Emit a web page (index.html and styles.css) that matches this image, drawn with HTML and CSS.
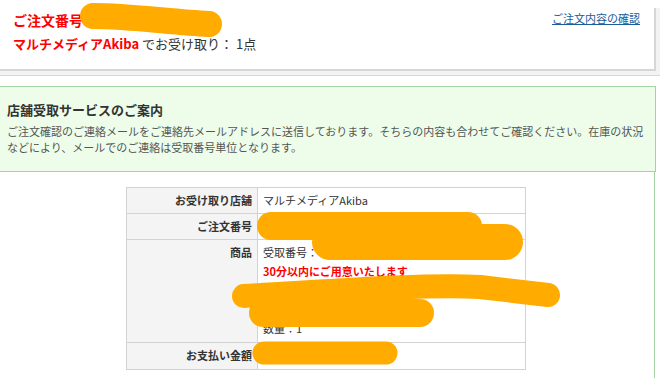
FILE: index.html
```html
<!DOCTYPE html>
<html lang="ja">

<head>
    <meta charset="UTF-8">
    <meta name="viewport" content="width=device-width, initial-scale=1.0">
    <title>ご注文内容</title>
    <link rel="stylesheet" href="styles.css">
</head>

<body>
    <div class="order-bar">
        <div class="order-card">
            <div class="order-row">
                <h1 class="order-no">ご注文番号</h1>
                <a class="order-link" href="#">ご注文内容の確認</a>
            </div>
            <p class="order-shop"><span class="shop-name">マルチメディアAkiba</span> でお受け取り： 1点</p>
        </div>
    </div>

    <div class="guide">
        <h2 class="guide-title">店舗受取サービスのご案内</h2>
        <p class="guide-text">ご注文確認のご連絡メールをご連絡先メールアドレスに送信しております。そちらの内容も合わせてご確認ください。在庫の状況などにより、メールでのご連絡は受取番号単位となります。</p>
    </div>

    <div class="detail">
        <table class="detail-table">
            <tr>
                <th>お受け取り店舗</th>
                <td>マルチメディアAkiba</td>
            </tr>
            <tr>
                <th>ご注文番号</th>
                <td>&nbsp;</td>
            </tr>
            <tr class="item-row">
                <th>商品</th>
                <td>
                    <div>受取番号：</div>
                    <div class="ready">30分以内にご用意いたします</div>
                    <div>&nbsp;</div>
                    <div>&nbsp;</div>
                    <div>数量：1</div>
                </td>
            </tr>
            <tr class="pay-row">
                <th>お支払い金額</th>
                <td>&nbsp;</td>
            </tr>
        </table>
    </div>

    <!-- redaction marks over personal data -->
    <svg class="mask" width="660" height="378" viewBox="0 0 660 378">
        <g fill="none" stroke="#ffab00" stroke-linecap="round" stroke-linejoin="round">
            <path d="M93 16 C130 16 170 22 209 24" stroke-width="26" />
            <path d="M271 226 L468 226" stroke-width="28" />
            <path d="M330 242 L505 242" stroke-width="36" />
            <path d="M244 296 C320 292 420 284 480 287 L548 295" stroke-width="24" />
            <path d="M263 313 L420 313" stroke-width="28" />
            <path d="M264 353 L386 353" stroke-width="23" />
        </g>
    </svg>
</body>

</html>
```

FILE: styles.css
```css
body {
    margin: 0;
    padding-top: 8px;
    font-family: "Noto Sans CJK JP", "Noto Sans", sans-serif;
    font-size: 11px;
    color: #333;
    position: relative;
    overflow: hidden;
}

.order-bar {
    background-color: #f2f3f5;
    padding: 0 4px 4px 0;
    border-bottom: 1px solid #d8d8d8;
}

.order-card {
    background-color: #fff;
    border-right: 2px solid #d6d6d6;
    border-bottom: 2px solid #d6d6d6;
    padding: 2px 14px 15px 13px;
}

.order-row {
    display: flex;
    justify-content: space-between;
    align-items: flex-start;
}

.order-no {
    margin: 0;
    font-size: 14px;
    line-height: 20px;
    font-weight: bold;
    color: #f00;
}

.order-link {
    font-size: 11px;
    line-height: 16px;
    color: #1d5c9b;
    text-decoration: underline;
}

.order-shop {
    margin: 4px 0 0;
    font-size: 13px;
    line-height: 20px;
    color: #333;
}

.shop-name {
    color: #f00;
    font-weight: bold;
}

.guide {
    box-sizing: border-box;
    width: 657px;
    margin: 10px 0 0 -1px;
    padding: 14px 6px 16px 7px;
    background-color: #edfdea;
    border: 1px solid #a3d3a0;
}

.guide-title {
    margin: 0;
    font-size: 13px;
    line-height: 18px;
    font-weight: bold;
    color: #333;
}

.guide-text {
    margin: 4px 0 0;
    line-height: 16px;
    color: #555;
}

.detail {
    box-sizing: border-box;
    width: 656px;
    height: 207px;
    margin: -1px 0 0 -1px;
    padding-top: 15px;
    background-color: #fff;
    border: 1px solid #a3d3a0;
    border-bottom: none;
}

.detail-table {
    width: 400px;
    margin-left: 126px;
    border-collapse: collapse;
    line-height: 19px;
}

.detail-table th,
.detail-table td {
    border: 1px solid #d3d3d3;
    padding: 3px 5px;
    vertical-align: top;
}

.detail-table th {
    width: 120px;
    background-color: #f4f4f4;
    text-align: right;
    font-weight: bold;
    color: #333;
}

.detail-table td {
    text-align: left;
    color: #333;
}

.item-row td,
.item-row th,
.pay-row td,
.pay-row th {
    padding-bottom: 4px;
}

.ready {
    color: #f00;
    font-weight: bold;
}

.mask {
    position: absolute;
    top: 0;
    left: 0;
    pointer-events: none;
}
```
